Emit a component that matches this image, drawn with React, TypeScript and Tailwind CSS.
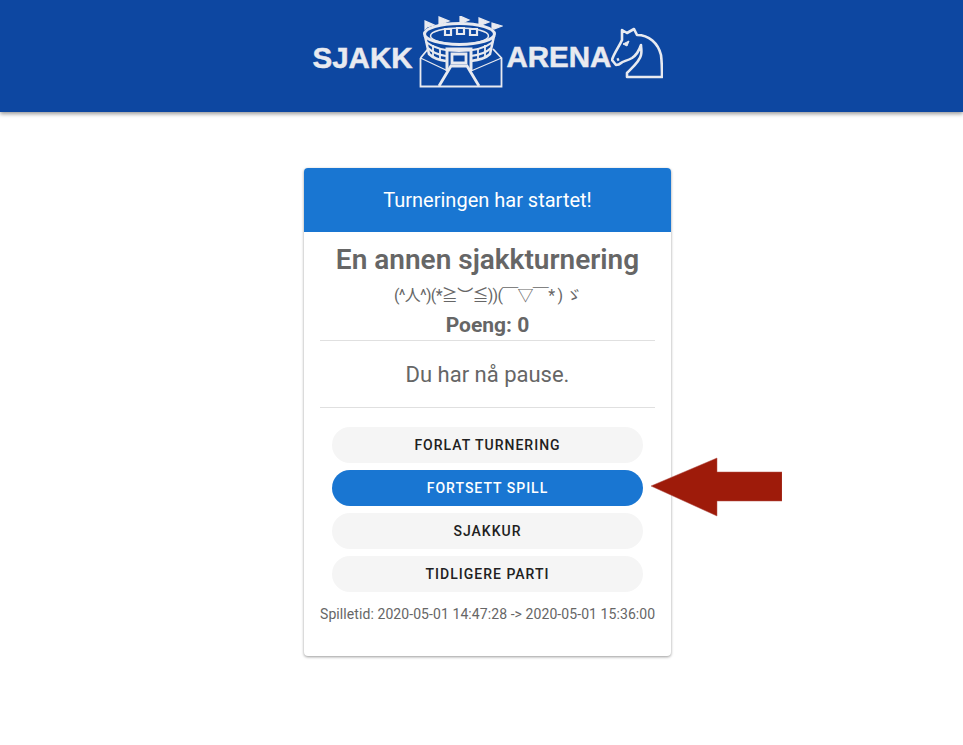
const roboto = "font-['Roboto','Noto_Sans_CJK_JP',sans-serif]";

function ArenaLogo() {
  return (
    <svg width="84" height="72" viewBox="0 0 84 72" fill="none" stroke="#e8eaf0" strokeWidth="2" className="shrink-0 mt-[2px]">
      {/* flags */}
      <path d="M6 13 L6 5 L15 9 L8 11 Z M20 9 L20 1 L30 5 L22 8 Z M41 7 L41 0 L50 4 L43 7 Z M60 8 L60 2 L70 6 L62 9 Z M73 12 L73 7 L83 10 L75 13 Z" fill="#e8eaf0" strokeWidth="1.2" />
      {/* stadium top ring */}
      <ellipse cx="40.5" cy="18" rx="35" ry="10.5" strokeWidth="3" />
      <ellipse cx="40.5" cy="20" rx="29" ry="8" strokeWidth="1.5" />
      <path d="M26 13h6v6h-6z M38 12h7v6h-7z M51 13h7v6h-7z" strokeWidth="2.2" />
      {/* stadium walls */}
      <path d="M6 20 L10 38 C14 42 20 44 27 45 M75 20 L71 38 C67 42 60 44 52 45" strokeWidth="2.5" />
      <path d="M7 26 C16 33 28 35 40 35 C52 35 65 33 74 26 M9 32 C14 37 20 39 27 40 M72 32 C67 37 60 39 52 40" strokeWidth="2.2" />
      <path d="M14 29v12 M21 32v11 M59 32v11 M66 29v12" strokeWidth="1.8" />
      {/* gate */}
      <path d="M28 55 V33 H52 V55" strokeWidth="3" />
      <path d="M33 47 V38 H47 V47 Z" strokeWidth="2.8" />
      {/* box and road */}
      <path d="M1.5 42 V70.5 H82.5 V42 L74 33 M1.5 42 L9 33" strokeWidth="1.8" />
      <path d="M1.5 42 L29 55 M82.5 42 L52 55" strokeWidth="1.2" />
      <path d="M20 70 L32 50 H48 L60 70" strokeWidth="2.8" />
    </svg>
  );
}

function KnightLogo() {
  return (
    <svg width="52" height="52" viewBox="0 0 52 52" fill="none" stroke="#e8eaf0" strokeWidth="2.6" strokeLinejoin="round" className="shrink-0">
      <path d="M11 3 L16 6 L23 2 L26 8 C38 8 47 16 50 28 C51 36 51 44 51 50 H16 V46 C22 40 29 34 30 28 C31 24 30 21 30 18 C28 24 24 29 21 31 C16 34 12 34 10 36 C8 38 5 38 5 38 L1 33 C3 26 8 20 11 13 Z" />
      <path d="M12 17 L18 14 L16 19 Z" fill="#e8eaf0" strokeWidth="1" />
      <path d="M6 33 L8 32" />
    </svg>
  );
}

function CardButton({ label, primary }: { label: string; primary?: boolean }) {
  return (
    <button
      type="button"
      className={
        primary
          ? "h-9 w-full rounded-full bg-[#1976d2] text-white text-sm font-medium tracking-[1px]"
          : "h-9 w-full rounded-full bg-[#f5f5f5] text-[#212121] text-sm font-medium tracking-[1px]"
      }
    >
      {label}
    </button>
  );
}

export default function App() {
  return (
    <div className={`min-h-[745px] bg-white ${roboto}`}>
      <header className="h-28 bg-[#0d47a1] shadow-[0_2px_4px_rgba(0,0,0,0.4)] flex justify-center pl-3 pt-[14px]">
        <div className="flex items-start h-[74px] font-['Liberation_Sans',sans-serif] font-bold text-[29.5px] leading-none text-[#e8eaf0] [-webkit-text-stroke:0.5px_#e8eaf0]">
          <span className="mt-[29px] w-[106px]">SJAKK</span>
          <ArenaLogo />
          <span className="mt-[28px] ml-[4px] w-[105px]">ARENA</span>
          <div className="mt-[13px] -ml-[1px]">
            <KnightLogo />
          </div>
        </div>
      </header>

      <main className="flex justify-center pl-3 pt-14">
        <div className="relative w-[367px] h-[488px] rounded bg-white shadow-[0_1px_3px_rgba(0,0,0,0.4)]">
          <div className="h-16 rounded-t bg-[#1976d2] flex items-center justify-center text-white text-xl">
            Turneringen har startet!
          </div>
          <div className="px-4 text-center text-[#666666]">
            <h1 className="text-[28px] leading-[32px] font-semibold pt-[12px]">En annen sjakkturnering</h1>
            <p className="text-base leading-6 mt-[8px] whitespace-nowrap tracking-[-0.7px]">(^人^)(*≧︶≦))(￣▽￣* ) ゞ</p>
            <p className="text-[21px] leading-6 font-bold mt-[5px] pb-[3px]">Poeng: 0</p>
            <div className="border-t border-[#e0e0e0]" />
            <p className="text-[22px] leading-8 pt-[18px] pb-[16px]">Du har nå pause.</p>
            <div className="border-t border-[#e0e0e0]" />
            <div className="flex flex-col gap-[7px] px-3 pt-[19px]">
              <CardButton label="FORLAT TURNERING" />
              <CardButton label="FORTSETT SPILL" primary />
              <CardButton label="SJAKKUR" />
              <CardButton label="TIDLIGERE PARTI" />
            </div>
            <p className="text-sm leading-5 mt-3 whitespace-nowrap tracking-[0.08px]">Spilletid: 2020-05-01 14:47:28 -&gt; 2020-05-01 15:36:00</p>
          </div>
          {/* callout arrow pointing at the button */}
          <svg width="132" height="60" viewBox="0 0 132 60" className="absolute left-[346px] top-[289px]">
            <path d="M1 29 L67 1 V15 H132 V44 H67 V59 Z" fill="#9e1b0a" stroke="#b0504a" strokeWidth="0.5" />
          </svg>
        </div>
      </main>
    </div>
  );
}
